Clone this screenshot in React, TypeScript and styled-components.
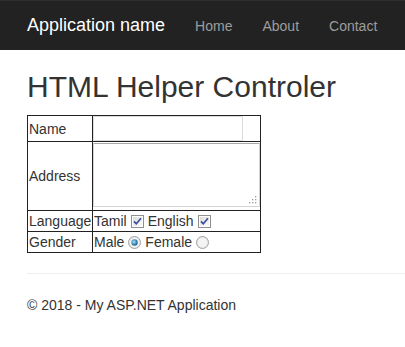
import React from "react";
import styled, { createGlobalStyle } from "styled-components";

const GlobalStyle = createGlobalStyle`
  html, body {
    margin: 0;
    padding: 0;
    background: #fff;
  }
  body {
    font-family: "Liberation Sans", Arial, sans-serif;
    font-size: 14px;
    line-height: 1.42857;
    color: #333;
  }
`;

const CheckBox: React.FC = () => (
  <BoxIcon width="13" height="13" viewBox="0 0 13 13">
    <defs>
      <linearGradient id="cbg" x1="0" y1="0" x2="1" y2="1">
        <stop offset="0" stopColor="#dcdcdc" />
        <stop offset="1" stopColor="#fbfbfb" />
      </linearGradient>
    </defs>
    <rect x="0.5" y="0.5" width="12" height="12" fill="#fff" stroke="#8e8f8f" />
    <rect x="2" y="2" width="9" height="9" fill="url(#cbg)" />
    <path d="M3 6.3 L5.3 8.8 L10 3.3" fill="none" stroke="#3b4f9c" strokeWidth="1.7" />
  </BoxIcon>
);

const Radio: React.FC<{ checked?: boolean }> = ({ checked }) => (
  <BoxIcon width="13" height="13" viewBox="0 0 13 13">
    <defs>
      <radialGradient id="rdot" cx="0.4" cy="0.4" r="0.6">
        <stop offset="0" stopColor="#a9e0ff" />
        <stop offset="1" stopColor="#125f8c" />
      </radialGradient>
    </defs>
    <circle cx="6.5" cy="6.5" r="6" fill="#e9e9e9" stroke="#a2a2a2" />
    <circle cx="6.5" cy="6.5" r="4.5" fill="#f4f4f4" />
    {checked && <circle cx="6.5" cy="6.5" r="3.2" fill="url(#rdot)" />}
  </BoxIcon>
);

const Grip: React.FC = () => (
  <GripIcon width="9" height="9" viewBox="0 0 9 9">
    {[
      [7, 1],
      [4, 4],
      [7, 4],
      [1, 7],
      [4, 7],
      [7, 7],
    ].map(([x, y]) => (
      <rect key={`${x}-${y}`} x={x} y={y} width="1.3" height="1.3" fill="#9a9a9a" />
    ))}
  </GripIcon>
);

const App: React.FC = () => {
  return (
    <>
      <GlobalStyle />
      <Navbar>
        <Brand>Application name</Brand>
        <NavLinks>
          <NavLink>Home</NavLink>
          <NavLink>About</NavLink>
          <NavLink>Contact</NavLink>
        </NavLinks>
      </Navbar>
      <Body>
        <Heading>HTML Helper Controler</Heading>
        <FormTable>
          <tbody>
            <tr>
              <LabelCell>Name</LabelCell>
              <Cell>
                <TextInput type="text" />
              </Cell>
            </tr>
            <tr>
              <LabelCell>Address</LabelCell>
              <Cell>
                <AreaWrap>
                  <TextArea />
                  <Grip />
                </AreaWrap>
              </Cell>
            </tr>
            <tr>
              <LabelCell>Language</LabelCell>
              <Cell>
                <Options>
                  Tamil <CheckBox /> English <CheckBox />
                </Options>
              </Cell>
            </tr>
            <tr>
              <LabelCell>Gender</LabelCell>
              <Cell>
                <Options>
                  Male <Radio checked /> Female <Radio />
                </Options>
              </Cell>
            </tr>
          </tbody>
        </FormTable>
        <Rule />
        <Footer>© 2018 - My ASP.NET Application</Footer>
      </Body>
    </>
  );
};

export default App;

const Navbar = styled.nav`
  display: flex;
  align-items: center;
  height: 50px;
  background-color: #222;
  border-top: 1px solid #2e2e2e;
  box-sizing: border-box;
  padding-left: 27px;
`;

const Brand = styled.a`
  font-size: 18px;
  color: #fff;
  line-height: 20px;
  margin-top: -1px;
`;

const NavLinks = styled.div`
  display: flex;
  margin-left: 15px;
`;

const NavLink = styled.a`
  padding: 0 15px;
  font-size: 14px;
  line-height: 20px;
  color: #9d9d9d;
`;

const Body = styled.main`
  padding-left: 27px;
`;

const Heading = styled.h2`
  margin: 20px 0 10px;
  font-size: 30px;
  font-weight: 500;
  line-height: 1.1;
  color: #333;
`;

const FormTable = styled.table`
  border-collapse: collapse;
  margin-top: 12px;
  border: 1px solid #222;
`;

const LabelCell = styled.td`
  border: 1px solid #222;
  padding: 0 0 0 1px;
  width: 63px;
  line-height: 16px;
  color: #333;
  vertical-align: middle;
`;

const Cell = styled.td`
  border: 1px solid #222;
  padding: 0;
  width: 167px;
  vertical-align: middle;
`;

const TextInput = styled.input`
  display: block;
  box-sizing: border-box;
  width: 150px;
  height: 25px;
  margin: 0;
  border: 1px solid #dcdcdc;
  border-radius: 1px;
  outline: none;
`;

const AreaWrap = styled.div`
  position: relative;
  margin: 1px 0 3px;
`;

const TextArea = styled.textarea`
  display: block;
  box-sizing: border-box;
  width: 167px;
  height: 64px;
  margin: 0;
  border: 1px solid #d4d4d4;
  border-top-color: #a9a9a9;
  border-radius: 1px;
  outline: none;
  resize: none;
`;

const GripIcon = styled.svg`
  position: absolute;
  right: 3px;
  bottom: 3px;
`;

const Options = styled.div`
  display: flex;
  align-items: center;
  gap: 4px;
  font-size: 14px;
  line-height: 20px;
  color: #333;
  padding-left: 1px;
`;

const BoxIcon = styled.svg`
  display: block;
  flex: none;
`;

const Rule = styled.hr`
  margin: 20px 0 0;
  border: 0;
  border-top: 1px solid #eee;
`;

const Footer = styled.footer`
  padding: 21px 0 20px;
  font-size: 14px;
  color: #333;
  line-height: 20px;
`;
